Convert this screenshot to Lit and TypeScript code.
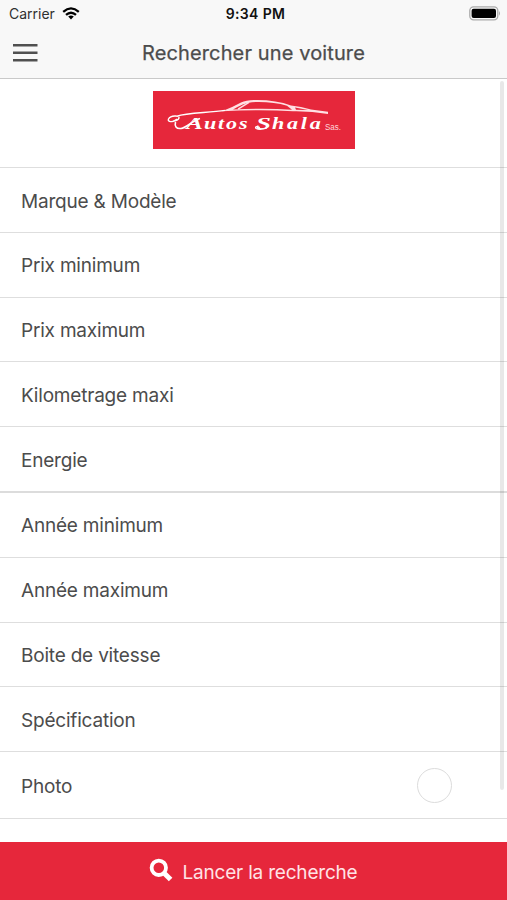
import { LitElement, html, css } from "lit";
import { customElement } from "lit/decorators.js";
import { classMap } from "lit/directives/class-map.js";

interface Field {
  label: string;
  height: number;
  low?: boolean;
  group?: boolean;
  toggle?: boolean;
}

const FIELDS: Field[] = [
  { label: "Marque & Modèle", height: 65, low: true },
  { label: "Prix minimum", height: 65 },
  { label: "Prix maximum", height: 64 },
  { label: "Kilometrage maxi", height: 65, low: true },
  { label: "Energie", height: 66, group: true, low: true },
  { label: "Année minimum", height: 65 },
  { label: "Année maximum", height: 65 },
  { label: "Boite de vitesse", height: 64 },
  { label: "Spécification", height: 65, low: true },
  { label: "Photo", height: 67, toggle: true, low: true },
];

@customElement("app-root")
export class AppRoot extends LitElement {
  static styles = css`
    :host {
      display: flex;
      flex-direction: column;
      position: relative;
      height: 900px;
      overflow: hidden;
      background: #fff;
      color: #4c4c4c;
      font-family: Inter, "Liberation Sans", sans-serif;
    }
    * { box-sizing: border-box; }
    svg { display: block; }
    header {
      height: 79px;
      flex: none;
      background: #f8f8f8;
      border-bottom: 1px solid #c9c9c9;
    }
    .status {
      display: grid;
      grid-template-columns: 1fr auto 1fr;
      align-items: center;
      height: 27px;
      padding: 0 6px 0 9px;
      color: #111;
      font-size: 14px;
    }
    .carrier { display: flex; align-items: center; gap: 7px; color: #303030; }
    .carrier svg { margin-top: -1px; }
    .clock { font-weight: 600; font-size: 14px; letter-spacing: 0.35px; padding-left: 1px; }
    .battery { justify-self: end; margin-top: -1px; }
    .nav {
      display: grid;
      grid-template-columns: 26px 1fr 26px;
      align-items: center;
      height: 51px;
      padding: 0 12px;
    }
    h1 {
      margin: 0;
      text-align: center;
      font-weight: 400;
      font-size: 20px;
      letter-spacing: 0.12px;
      white-space: nowrap;
      -webkit-text-stroke: 0.25px #4c4c4c;
    }
    .brand {
      height: 89px;
      flex: none;
      display: flex;
      justify-content: center;
      padding-top: 12px;
      border-bottom: 1px solid #dedede;
    }
    .row {
      display: flex;
      flex: none;
      align-items: center;
      justify-content: space-between;
      padding: 1px 55px 0 21px;
      border-bottom: 1px solid #dedede;
      font-size: 19px;
      letter-spacing: -0.2px;
    }
    .row.low { padding-top: 2px; }
    .row.group { border-bottom: 2px solid #dcdcdc; }
    .toggle {
      width: 35px;
      height: 35px;
      border: 1px solid #dcdcdc;
      border-radius: 50%;
      margin-top: -1px;
    }
    .scrollbar {
      position: absolute;
      right: 3px;
      top: 81px;
      width: 4px;
      height: 709px;
      border-radius: 2px;
      background: rgba(0, 0, 0, 0.09);
    }
    .search {
      display: flex;
      align-items: center;
      justify-content: center;
      gap: 9px;
      height: 58px;
      margin-top: auto;
      flex: none;
      border: 0;
      padding: 3px 0 0;
      background: #e6273b;
      color: #fff;
      font: 400 19px Inter, "Liberation Sans", sans-serif;
      letter-spacing: -0.2px;
    }
    .search svg { margin: -6px 1px 0 -1px; }
    .search span { color: #ffe3e6; }
  `;

  private logo() {
    return html`<svg width="202" height="58" viewBox="0 0 202 58">
      <rect width="202" height="58" fill="#e6273b" />
      <path d="M69 20.3 Q80 16 88 11.5 Q93 9 101 9 Q122 8.5 138 14.5 Q148 15.5 158 18.5 L175 20.8 L175 23 Q158 20 140 20.3 Q108 18 69 20.3Z" fill="#ffe0e3" />
      <path d="M80 18.6 Q90 12.2 99 11.2 Q119 10.3 134 14.8 L139 18.8 Q112 16.6 80 18.6Z" fill="#e6273b" />
      <path d="M142 16.5 L155 19 L143 18.8Z" fill="#e6273b" />
      <path d="M85 18.2 L96 11.3" stroke="#ffe0e3" stroke-width="1.5" />
      <path d="M24 28 C20 32 14 31 15.5 28 C17.5 24.5 27 24 26 27 C25.5 28.5 23 30 20 30 M24 25.2 C34 21.5 55 22 72 19.4" fill="none" stroke="#fff" stroke-width="1.4" />
      <path d="M22.5 31 C21.5 35 23 38 28 37.5 C34 36.5 39 30 47 27.5" fill="none" stroke="#fff" stroke-width="1.6" />
      <g fill="#fff" font-family="Liberation Serif, serif" font-size="17" font-weight="700" font-style="italic">
        <text x="33" y="38.3" textLength="17" lengthAdjust="spacingAndGlyphs">A</text>
        <text transform="translate(51 38.3) scale(1.3 1)" textLength="33.5" lengthAdjust="spacing">utos</text>
        <text x="103" y="38.3" textLength="15" lengthAdjust="spacingAndGlyphs">S</text>
        <text transform="translate(119 38.3) scale(1.3 1)" textLength="37.5" lengthAdjust="spacing">hala</text>
      </g>
      <path d="M107 36.5 Q101 34.5 103 37.5 Q107 39.5 114 37" fill="none" stroke="#fff" stroke-width="1.2" />
      <text x="172" y="38.6" fill="#ffd5da" font-family="Liberation Sans, sans-serif" font-size="8.5" textLength="16" lengthAdjust="spacingAndGlyphs">Sas.</text>
    </svg>`;
  }

  render() {
    return html`
      <header>
        <div class="status">
          <div class="carrier">
            <span>Carrier</span>
            <svg width="18" height="13" viewBox="0 0 18 13">
              <g fill="none" stroke="#000" stroke-width="2.3">
                <path d="M1.2 4.8 Q9 -2 16.8 4.8" />
                <path d="M4 7.9 Q9 3.5 14 7.9" />
              </g>
              <path d="M6.2 9.5 Q9 7.3 11.8 9.5 L9 12.5Z" />
            </svg>
          </div>
          <span class="clock">9:34 PM</span>
          <svg class="battery" width="32" height="15" viewBox="0 0 32 15">
            <rect x=".8" y=".8" width="28" height="13" rx="3.8" fill="none" stroke="#aaa" stroke-width="1.3" />
            <rect x="2.6" y="2.7" width="24.4" height="9.4" rx="2" />
            <path d="M30 5 Q32 7.4 30 9.8Z" fill="#aaa" />
          </svg>
        </div>
        <div class="nav">
          <svg width="26" height="20" viewBox="0 0 26 20">
            <path d="M1 2.3H25.5M1 9.8H25.5M1 17.3H25.5" stroke="#505050" stroke-width="2.5" />
          </svg>
          <h1>Rechercher une voiture</h1>
        </div>
      </header>
      <div class="brand">${this.logo()}</div>
      ${FIELDS.map(
        (f) => html`<div class=${classMap({ row: true, group: !!f.group, low: !!f.low })} style="height:${f.height}px">
          <span>${f.label}</span>
          ${f.toggle ? html`<span class="toggle"></span>` : null}
        </div>`
      )}
      <div class="scrollbar"></div>
      <button class="search">
        <svg width="24" height="24" viewBox="0 0 24 24" fill="none" stroke="#fff">
          <circle cx="9.8" cy="9.8" r="7.2" stroke-width="3.8" />
          <path d="M15 15 L21.6 21.6" stroke-width="5" />
        </svg>
        <span>Lancer la recherche</span>
      </button>
    `;
  }
}
